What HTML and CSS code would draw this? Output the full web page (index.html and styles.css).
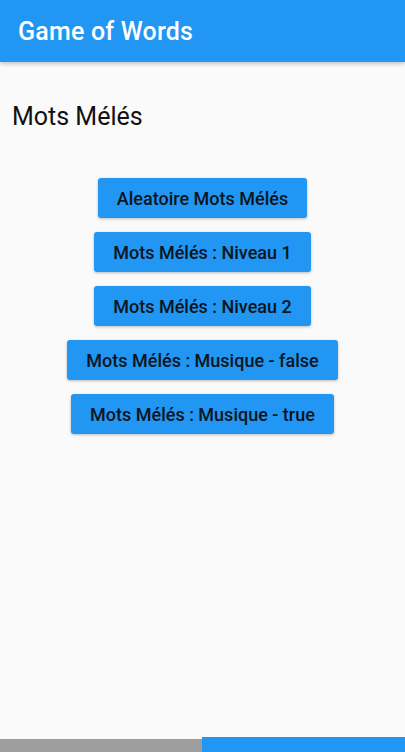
FILE: index.html
```html
<!DOCTYPE html>
<html>
<head>
<meta charset="utf-8">
<link rel="stylesheet" href="styles.css">
</head>
<body>
<div class="app">
  <header class="appbar"><span class="title">Game of Words</span></header>
  <main class="content">
    <h1 class="heading">Mots Mélés</h1>
    <div class="buttons">
      <button class="btn">Aleatoire Mots Mélés</button>
      <button class="btn">Mots Mélés : Niveau 1</button>
      <button class="btn">Mots Mélés : Niveau 2</button>
      <button class="btn">Mots Mélés : Musique - false</button>
      <button class="btn">Mots Mélés : Musique - true</button>
    </div>
  </main>
  <footer class="bottom">
    <div class="bar-gray"></div>
    <div class="bar-blue"></div>
  </footer>
</div>
</body>
</html>
```
FILE: styles.css
```css
html, body {
  margin: 0;
  padding: 0;
  background: #fafafa;
  font-family: Roboto, "Noto Sans", sans-serif;
}
.app {
  width: 405px;
  height: 752px;
  display: flex;
  flex-direction: column;
  overflow: hidden;
}
.appbar {
  height: 62px;
  flex: none;
  background: #2196f3;
  display: flex;
  align-items: center;
  padding-left: 18px;
  box-shadow: 0 2px 4px rgba(0,0,0,0.22);
  position: relative;
  z-index: 1;
}
.title {
  color: #fff;
  font-size: 25px;
  font-weight: 500;
  letter-spacing: 0.2px;
  padding-top: 1px;
}
.content {
  flex: 1;
  display: flex;
  flex-direction: column;
}
.heading {
  margin: 40px 0 0 12px;
  font-size: 25px;
  font-weight: 400;
  color: #111;
  line-height: 30px;
}
.buttons {
  margin-top: 46px;
  display: flex;
  flex-direction: column;
  align-items: center;
  gap: 14px;
}
.btn {
  height: 40px;
  padding: 0 19px;
  border: none;
  border-radius: 3px;
  background: #2196f3;
  color: #0d1520;
  font-family: Roboto, sans-serif;
  font-size: 18px;
  font-weight: 500;
  box-shadow: 0 1px 3px rgba(0,0,0,0.25);
}
.bottom {
  flex: none;
  height: 15px;
  display: flex;
  align-items: flex-end;
}
.bar-gray {
  width: 202px;
  height: 13px;
  background: #9e9e9e;
}
.bar-blue {
  flex: 1;
  height: 15px;
  background: #2196f3;
}
```
